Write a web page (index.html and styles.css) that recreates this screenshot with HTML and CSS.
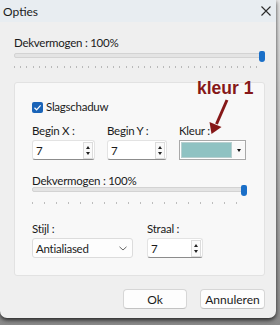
FILE: index.html
```html
<!DOCTYPE html>
<html>
<head>
  <meta name="viewport" content="width=device-width, initial-scale=1" />
  <title>Opties</title>
  <link rel="stylesheet" href="styles.css">
</head>
<body>
  <div class="window">
    <div class="titlebar">
      <span>Opties</span>
      <svg class="close" width="10" height="10" viewBox="0 0 10 10"><path d="M0.5 0.5 L9.5 9.5 M9.5 0.5 L0.5 9.5" stroke="#2b2b2b" stroke-width="1.1"/></svg>
    </div>
    <div class="content">
      <div class="label top-label">Dekvermogen : 100%</div>
      <div class="slider slider-wide"><div class="track"></div><div class="thumb"></div></div>
      <div class="ticks ticks-wide"></div>

      <div class="panel">
        <label class="check"><span class="box"><svg width="9" height="9" viewBox="0 0 9 9"><path d="M1.5 4.8 L3.6 6.8 L7.6 2.3" fill="none" stroke="#fff" stroke-width="1.2"/></svg></span>Slagschaduw</label>

        <div class="row fields">
          <div class="field fx">
            <div class="label">Begin X :</div>
            <div class="input"><span>7</span><span class="spin"><i class="up"></i><i class="down"></i></span></div>
          </div>
          <div class="field fy">
            <div class="label">Begin Y :</div>
            <div class="input"><span>7</span><span class="spin"><i class="up"></i><i class="down"></i></span></div>
          </div>
          <div class="field fc">
            <div class="label">Kleur :</div>
            <div class="color"><span class="swatch"></span><span class="drop"><i></i></span></div>
          </div>
        </div>

        <div class="label mid-label">Dekvermogen : 100%</div>
        <div class="slider slider-small"><div class="track"></div><div class="thumb"></div></div>
        <div class="ticks ticks-small"></div>

        <div class="row styles">
          <div class="field fs">
            <div class="label">Stijl :</div>
            <div class="select"><span>Antialiased</span><svg width="8" height="5" viewBox="0 0 8 5"><path d="M0.5 0.8 L4 4 L7.5 0.8" fill="none" stroke="#555" stroke-width="0.9"/></svg></div>
          </div>
          <div class="field fr">
            <div class="label">Straal :</div>
            <div class="input"><span>7</span><span class="spin"><i class="up"></i><i class="down"></i></span></div>
          </div>
        </div>
      </div>

      <div class="buttons">
        <button class="btn btn-ok">Ok</button>
        <button class="btn btn-cancel">Annuleren</button>
      </div>
    </div>

    <div class="note">kleur 1</div>
    <svg class="arrow" width="280" height="325" viewBox="0 0 280 325">
      <path d="M227 100 L216.5 124" stroke="#861818" stroke-width="3"/>
      <polygon points="211.5,134 209.5,122 221.5,127" fill="#861818"/>
    </svg>
  </div>
</body>
</html>
```

FILE: styles.css
```css
body {
  margin: 0;
  width: 280px;
  height: 325px;
  background: linear-gradient(#e6e6e6, #8a8a8a);
  font-family: Lato, "Noto Sans", sans-serif;
  font-size: 11.5px;
  letter-spacing: -0.25px;
  color: #1b1b1b;
  overflow: hidden;
}
.window {
  position: relative;
  width: 276px;
  height: 318px;
  background: #efefef;
  border-radius: 0 0 7px 7px;
  box-shadow: 0 2px 4px rgba(0, 0, 0, 0.75);
}
.titlebar {
  height: 22px;
  display: flex;
  align-items: center;
  justify-content: space-between;
  padding: 0 5px 0 3px;
  background: #e8edf1;
  font-size: 12px;
  letter-spacing: 0;
}
.content {
  padding: 13px 11px 0 14px;
}
.label {
  line-height: 16px;
  white-space: nowrap;
}

/* sliders */
.slider {
  position: relative;
  height: 12px;
}
.track {
  position: absolute;
  left: 0;
  top: 2px;
  height: 3px;
  background: #e4e4e4;
  border: 1px solid #d3d3d3;
  border-radius: 2px;
}
.thumb {
  position: absolute;
  right: 0;
  top: 0;
  width: 6px;
  height: 11px;
  background: #1a6fc8;
  border-radius: 2px 2px 3px 3px;
}
.slider-wide .track {
  right: 3px;
}
.slider-small {
  width: 215px;
  margin-top: -4px;
}
.slider-small .track {
  right: 0;
}
.ticks {
  height: 2px;
  background: repeating-linear-gradient(to right, #b9b9b9 0 1px, transparent 1px 6.2px);
}
.ticks-wide {
  margin-top: 3px;
  width: 248px;
}
.ticks-small {
  margin-top: 5px;
  width: 215px;
  background: repeating-linear-gradient(to right, #bdbdbd 0 1px, transparent 1px 12px);
}

/* group panel */
.panel {
  margin-top: 14px;
  background: #f8f8f8;
  border: 1px solid #e2e2e2;
  border-radius: 3px;
  padding: 16px 0 17px 17px;
}
.check {
  display: flex;
  align-items: center;
  gap: 3px;
  line-height: 16px;
}
.box {
  width: 11px;
  height: 11px;
  background: #1a64b8;
  border-radius: 2px;
  display: flex;
  align-items: center;
  justify-content: center;
}
.row {
  display: flex;
}
.fields {
  margin-top: 8px;
  gap: 12px;
}
.field .label {
  margin-bottom: 1px;
}
.fx { width: 63px; }
.fy { width: 60px; }
.fc { width: 67px; }
.fs { width: 101px; }
.fr { width: 56px; }
.styles {
  margin-top: 17px;
  gap: 14px;
}

.input {
  height: 20px;
  box-sizing: border-box;
  background: #fff;
  border: 1px solid #e3e3e3;
  border-bottom: 1px solid #8c8c8c;
  border-radius: 3px;
  display: flex;
  align-items: center;
  justify-content: space-between;
  padding: 0 1px 0 3px;
}
.spin {
  width: 8px;
  height: 15px;
  border: 1px solid #dcdcdc;
  background: #fafafa;
  display: flex;
  flex-direction: column;
  align-items: center;
  justify-content: center;
  gap: 3px;
}
.spin i {
  width: 0;
  height: 0;
  border-left: 2.5px solid transparent;
  border-right: 2.5px solid transparent;
}
.spin .up {
  border-bottom: 3px solid #222;
}
.spin .down {
  border-top: 3px solid #222;
}

.color {
  height: 20px;
  box-sizing: border-box;
  border: 1px solid #a9a9a9;
  background: #fff;
  display: flex;
  padding: 1px 0 1px 1px;
}
.swatch {
  width: 49px;
  background: #8fc2c2;
  border: 1px solid #b8cfcf;
}
.drop {
  flex: 1;
  display: flex;
  align-items: center;
  justify-content: center;
  background: #f9f9f9;
}
.drop i {
  width: 0;
  height: 0;
  border-left: 2.5px solid transparent;
  border-right: 2.5px solid transparent;
  border-top: 3px solid #111;
}

.mid-label {
  margin-top: 13px;
}

.select {
  height: 20px;
  box-sizing: border-box;
  background: #fdfdfd;
  border: 1px solid #dcdcdc;
  border-radius: 3px;
  display: flex;
  align-items: center;
  justify-content: space-between;
  padding: 0 5px 0 3px;
}

/* buttons */
.buttons {
  display: flex;
  justify-content: flex-end;
  gap: 13px;
  margin-top: 13px;
}
.btn {
  height: 20px;
  padding: 0;
  font-family: Lato, "Noto Sans", sans-serif;
  font-size: 12px;
  color: #1b1b1b;
  background: #fdfdfd;
  border: 1px solid #d6d6d6;
  border-bottom-color: #c2c2c2;
  border-radius: 4px;
}
.btn-ok { width: 64px; }
.btn-cancel { width: 65px; }

/* annotation over the dialog */
.note {
  position: absolute;
  left: 197px;
  top: 80px;
  font-family: "Liberation Sans", Arial, sans-serif;
  font-weight: bold;
  font-size: 17.5px;
  line-height: 17px;
  letter-spacing: 0;
  color: #861818;
}
.arrow {
  position: absolute;
  left: 0;
  top: 0;
  pointer-events: none;
}
```
